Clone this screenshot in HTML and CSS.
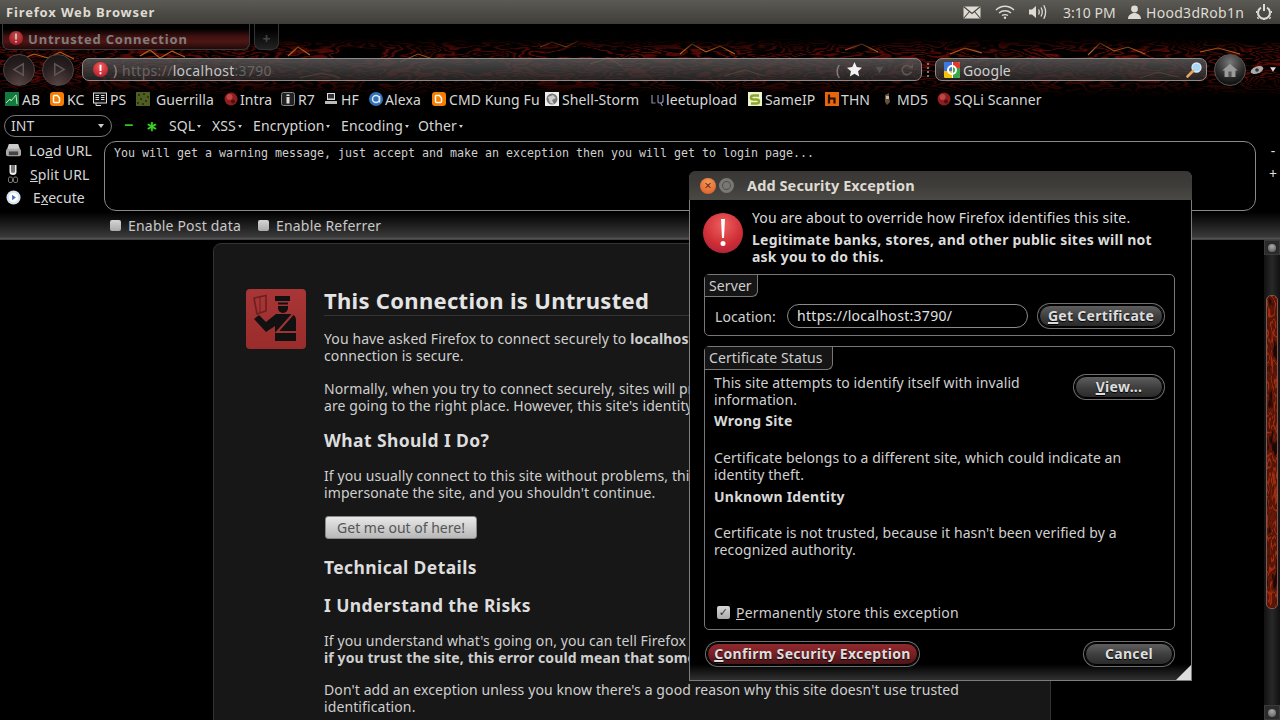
FILE: index.html
```html
<!DOCTYPE html>
<html lang="en">
<head>
<meta charset="utf-8">
<title>Untrusted Connection</title>
<link rel="stylesheet" href="styles.css">
</head>
<body>
<svg class="defs" width="0" height="0" aria-hidden="true">
  <defs>
    <filter id="lavaRed" x="0" y="0" width="100%" height="100%" color-interpolation-filters="sRGB">
      <feTurbulence type="fractalNoise" baseFrequency="0.018 0.07" numOctaves="3" seed="11" result="n"/>
      <feColorMatrix in="n" type="matrix" values="0 0 0 0 0.56  0 0 0 0 0.07  0 0 0 0 0.04  1 0 0 0 0"/>
      <feComponentTransfer><feFuncA type="table" tableValues="0 0 0 0 0 0 0 0 0 0 0 0 0 0 .2 .7 .2 0 0 .5 .6 0 0 .1 .6 .1 0 0 .5 .1 0 .4 .1 0 0 0 0 0 0 0 0"/></feComponentTransfer>
    </filter>
    <filter id="lavaV" x="0" y="0" width="100%" height="100%" color-interpolation-filters="sRGB">
      <feTurbulence type="fractalNoise" baseFrequency="0.1 0.03" numOctaves="3" seed="5" result="n"/>
      <feColorMatrix in="n" type="matrix" values="0 0 0 0 0.74  0 0 0 0 0.2  0 0 0 0 0.06  1 0 0 0 0"/>
      <feComponentTransfer><feFuncA type="table" tableValues="0 0 0 0 0 0 0 .2 .5 .3 .9 .3 .4 .3 .9 .3 .4 .2 0 0 0"/></feComponentTransfer>
    </filter>
    <linearGradient id="lavaFade" x1="0" y1="0" x2="0" y2="1">
      <stop offset="0" stop-color="#000"/>
      <stop offset=".08" stop-color="#000"/>
      <stop offset=".24" stop-color="#fff"/>
      <stop offset=".55" stop-color="#fff"/>
      <stop offset=".8" stop-color="#000"/>
    </linearGradient>
    <mask id="lavaMask"><rect width="1280" height="80" fill="url(#lavaFade)"/></mask>
    <radialGradient id="redDot" cx=".5" cy=".3" r=".8">
      <stop offset="0" stop-color="#ee6060"/><stop offset=".6" stop-color="#cf2f36"/><stop offset="1" stop-color="#a81e3c"/>
    </radialGradient>
    <linearGradient id="officerBg" x1="0" y1="0" x2="0" y2="1">
      <stop offset="0" stop-color="#a93636"/><stop offset="1" stop-color="#9a2c2c"/>
    </linearGradient>
  </defs>
</svg>

<header class="panel">
  <span class="panel-title">Firefox Web Browser</span>
  <div class="indicators">
    <svg class="ind-mail" viewBox="0 0 18 13"><rect x=".5" y=".5" width="17" height="12" fill="#dfdbd2"/><path d="M.5 .5 9 7.500 17.500 .5M.5 12.500 6.500 5.500M17.500 12.500 11.500 5.500" fill="none" stroke="#45433f" stroke-width="1.100"/></svg>
    <svg class="ind-wifi" viewBox="0 0 20 14"><path d="M1 5C6 0 14 0 19 5M4 8C7.500 5 12.500 5 16 8M7 10.500C8.500 9.500 11.500 9.500 13 10.500" fill="none" stroke="#dfdbd2" stroke-width="1.400"/><circle cx="10" cy="12.800" r="1.200" fill="#dfdbd2"/></svg>
    <svg class="ind-vol" viewBox="0 0 20 16"><path d="M1 5.500H4L8 2V14L4 10.500H1Z" fill="#dfdbd2"/><path d="M10.500 5.500Q12 8 10.500 10.500M13 3.500Q15.500 8 13 12.500M15.800 1.200Q19.400 8 15.800 14.800" fill="none" stroke="#dfdbd2" stroke-width="1.300"/></svg>
    <span class="ind-time">3:10 PM</span>
    <svg class="ind-user" viewBox="0 0 13 14"><circle cx="6.500" cy="4" r="3.400" fill="#dfdbd2"/><path d="M0 14C0 10 3 9 5 8H8C10 9 13 10 13 14Z" fill="#dfdbd2"/></svg>
    <span class="ind-name">Hood3dRob1n</span>
    <svg class="ind-power" viewBox="0 0 16 16"><path d="M5 3.600A6 6 0 1 0 11 3.600" fill="none" stroke="#dfdbd2" stroke-width="2"/><path d="M8 .5V7" stroke="#dfdbd2" stroke-width="2"/><path d="M8 0V2M1 8H0M16 8H15M2.500 13.500 1.500 14.500M13.500 13.500 14.500 14.500M8 15V16" stroke="#dfdbd2" stroke-width="2"/></svg>
  </div>
</header>

<section class="chrome">
  <svg class="lava" viewBox="0 0 1280 80" aria-hidden="true">
    <g mask="url(#lavaMask)">
      <rect width="1280" height="80" filter="url(#lavaRed)"/>
      <path d="M20 28 34 22 48 26 60 20 74 27M140 24 150 18 160 26 172 19 185 25M288 24 298 15 310 23M540 15 552 10 566 15 578 9M680 22 692 12 706 20 720 14 735 22M845 18 862 12 878 20M950 22 965 16 982 21M1088 23 1100 11 1114 19 1128 15 1145 22M1200 20 1218 16 1240 22" fill="none" stroke="#b8601c" stroke-width="1.100"/>
      <path d="M300 46 322 41 340 46M724 44 745 38 765 44M1140 46 1158 40 1178 45M590 32 608 26 622 34M400 30 418 22 436 28" fill="none" stroke="#8a5216" stroke-width="1"/>
    </g>
  </svg>

  <div class="tabs">
    <div class="tab">
      <svg class="tab-dot" viewBox="0 0 14 14"><circle cx="7" cy="7" r="7" fill="url(#redDot)"/><path d="M7 2.500V8.500M7 10V11.500" stroke="#fff" stroke-width="1.800"/></svg>
      <span>Untrusted Connection</span>
    </div>
    <div class="new-tab">+</div>
  </div>

  <div class="nav">
    <div class="round-btn"><svg viewBox="0 0 16 16"><path d="M12 2V14L2 8Z" fill="none" stroke="#5c5656" stroke-width="1.600"/></svg></div>
    <div class="round-btn second"><svg viewBox="0 0 16 16"><path d="M4 2V14L14 8Z" fill="none" stroke="#5c5656" stroke-width="1.600"/></svg></div>
    <div class="url-bar">
      <svg class="url-dot" viewBox="0 0 16 16"><circle cx="8" cy="8" r="8" fill="url(#redDot)"/><path d="M8 3V9.500M8 11V13" stroke="#fff" stroke-width="2"/></svg>
      <span class="url-bracket">)</span>
      <span class="url-text">https://<b>localhost</b>:3790</span>
      <span class="url-bracket end">(</span>
      <svg class="url-star" viewBox="0 0 16 16"><path d="M8 0 10.400 5.300 16 6 11.800 9.800 13 15.500 8 12.500 3 15.500 4.200 9.800 0 6 5.600 5.300Z" fill="#f2f2f2"/></svg>
      <svg class="url-drop" viewBox="0 0 10 10"><path d="M0 1H10L5 9Z" fill="#55514f"/></svg>
      <svg class="url-reload" viewBox="0 0 14 14"><path d="M12 5A5.500 5.500 0 1 0 12 9" fill="none" stroke="#5c5856" stroke-width="2"/><path d="M9 5H14V0Z" fill="#5c5856"/></svg>
    </div>
    <div class="grip"></div>
    <div class="search-bar">
      <svg class="g-logo" viewBox="0 0 16 16"><rect width="16" height="16" rx="2" fill="#fff"/><path d="M9 0H14A2 2 0 0 1 16 2V6H9Z" fill="#e03a2e"/><path d="M9 6H16V14A2 2 0 0 1 14 16H9Z" fill="#3aa648"/><path d="M0 9H8V16H2A2 2 0 0 1 0 14Z" fill="#f4c20d"/><path d="M0 0H8V9H0Z" fill="#3e78e0"/><circle cx="8" cy="8" r="4" fill="none" stroke="#fff" stroke-width="2"/></svg>
      <span>Google</span>
      <svg class="search-glass" viewBox="0 0 16 16"><circle cx="10.500" cy="5.500" r="4.500" fill="#a9d7f5" stroke="#d6eefc" stroke-width="1.300"/><path d="M7 9 1.500 14.500" stroke="#e0a860" stroke-width="2.600" stroke-linecap="round"/></svg>
    </div>
    <div class="home-btn"><svg viewBox="0 0 20 18"><path d="M10 1 20 9.500H17V18H3V9.500H0Z" fill="#9b9b9b"/><rect x="8" y="11" width="4" height="7" fill="#555"/></svg></div>
    <svg class="addon-eye" viewBox="0 0 14 10"><ellipse cx="7" cy="5" rx="6.500" ry="3.500" transform="rotate(-20 7 5)" fill="#aaa"/><circle cx="7" cy="5" r="1.800" fill="#333"/></svg>
    <svg class="addon-drop" viewBox="0 0 8 6"><path d="M0 0H8L4 6Z" fill="#ddd"/></svg>
  </div>

  <nav class="bookmarks">
    <a class="bm"><svg viewBox="0 0 14 14"><rect width="14" height="14" fill="#127a3e"/><path d="M1 11 5 7 6 9 11 3 12 12" fill="none" stroke="#bfe8b0" stroke-width="1"/></svg>AB</a>
    <a class="bm"><svg viewBox="0 0 14 14"><rect width="14" height="14" rx="3" fill="#f57d00"/><path d="M4 3.500H7.500L9.500 6V9.500A1 1 0 0 1 8.500 10.500H4.500A1 1 0 0 1 3.500 9.500V4Z" fill="none" stroke="#fff" stroke-width="1.500"/></svg>KC</a>
    <a class="bm"><svg viewBox="0 0 14 14"><rect x=".5" y="1" width="13" height="10" fill="#111" stroke="#ddd"/><path d="M2.500 3.500H6M2.500 5.500H6M2.500 7.500H6M8 3.500H11.500M8 5.500H11.500M8 7.500H11.500M3 11V13.500H8" stroke="#ddd" fill="none"/></svg>PS</a>
    <a class="bm wide"><svg viewBox="0 0 14 14"><rect width="14" height="14" fill="#4f5c22"/><path d="M2 2h2v2H2zM7 1h2v2H7zM11 4h2v2h-2zM4 6h2v2H4zM9 8h2v2H9zM1 10h2v2H1zM6 11h2v2H6z" fill="#2c3612"/></svg>Guerrilla</a>
    <a class="bm"><svg viewBox="0 0 14 14"><circle cx="7" cy="7" r="6.500" fill="#8e1f1f"/><circle cx="5.500" cy="5" r="3" fill="#c24545"/><circle cx="9" cy="9.500" r="2" fill="#4d0f0f"/></svg>Intra</a>
    <a class="bm"><svg viewBox="0 0 14 14"><rect x=".5" y=".5" width="13" height="13" rx="2" fill="#222" stroke="#888"/><path d="M5.500 5H8.500V11.500H5.500Z" fill="#ddd"/><rect x="5.500" y="2.500" width="3" height="1.500" fill="#ddd"/></svg>R7</a>
    <a class="bm"><svg viewBox="0 0 14 14"><rect x="3" y="1" width="8" height="7" fill="#ddd"/><rect x="4" y="2" width="6" height="4.500" fill="#333"/><rect x="1" y="9" width="12" height="3" fill="#bbb"/></svg>HF</a>
    <a class="bm"><svg viewBox="0 0 14 14"><circle cx="7" cy="7" r="7" fill="#3371b8"/><circle cx="7" cy="7" r="3.500" fill="none" stroke="#dce9f7" stroke-width="1.500"/><path d="M10.500 4V10.500" stroke="#dce9f7" stroke-width="1.500"/></svg>Alexa</a>
    <a class="bm"><svg viewBox="0 0 14 14"><rect width="14" height="14" rx="3" fill="#f57d00"/><path d="M4 3.500H7.500L9.500 6V9.500A1 1 0 0 1 8.500 10.500H4.500A1 1 0 0 1 3.500 9.500V4Z" fill="none" stroke="#fff" stroke-width="1.500"/></svg>CMD Kung Fu</a>
    <a class="bm"><svg viewBox="0 0 14 14"><rect width="14" height="14" fill="#eee"/><circle cx="7" cy="7" r="5.500" fill="#777"/><path d="M3 5 8 3 11 6 7 8 9 12 5 11Z" fill="#ccc"/></svg>Shell-Storm</a>
    <a class="bm"><svg viewBox="0 0 14 14"><path d="M2 3V11H5.500M8 3V10Q8 11 10 11Q13 11 13 9V3M10.500 11 12.500 14" fill="none" stroke="#8a8aa8" stroke-width="1.200"/></svg>leetupload</a>
    <a class="bm"><svg viewBox="0 0 14 14"><rect width="14" height="14" fill="#eef2d0"/><path d="M11 3.500H5.500Q3 3.500 3 5.500T5.500 7.500H8.500Q11 7.500 11 9.500T8.500 11.500H3" fill="none" stroke="#8aa82a" stroke-width="2.400"/></svg>SameIP</a>
    <a class="bm"><svg viewBox="0 0 14 14"><rect width="14" height="14" fill="#e8650a"/><path d="M4 2.500V11.500M4 6.500H9.500V11.500" fill="none" stroke="#201005" stroke-width="2.200"/></svg>THN</a>
    <a class="bm"><svg viewBox="0 0 14 14"><path d="M5 3 9 1V5L10 10 7 13 5 10Z" fill="#66503a"/><path d="M6 4H9V7H6Z" fill="#c8b89a"/></svg>MD5</a>
    <a class="bm"><svg viewBox="0 0 14 14"><circle cx="7" cy="7" r="6.500" fill="#8e1f1f"/><circle cx="5.500" cy="5" r="3" fill="#c24545"/><circle cx="9" cy="9.500" r="2" fill="#4d0f0f"/></svg>SQLi Scanner</a>
  </nav>

  <div class="hack-menu">
    <div class="int-select"><span>INT</span><i class="caret"></i></div>
    <span class="op">&minus;</span>
    <span class="op star">&lowast;</span>
    <ul class="menus">
      <li>SQL<i class="caret small"></i></li>
      <li>XSS<i class="caret small"></i></li>
      <li>Encryption<i class="caret small"></i></li>
      <li>Encoding<i class="caret small"></i></li>
      <li>Other<i class="caret small"></i></li>
    </ul>
  </div>

  <div class="hack-main">
    <div class="hack-actions">
      <div class="action">
        <svg viewBox="0 0 16 16"><path d="M3 1H13L15 7H1Z" fill="#ccc"/><rect y="6" width="16" height="8" rx="2" fill="#aaa"/><rect x="3" y="9" width="10" height="4" fill="#444"/></svg>
        <span class="load">Lo<u>a</u>d URL</span>
      </div>
      <div class="action">
        <svg class="split-icon" viewBox="0 0 12 18"><path d="M3.500 0V7Q3.500 9 6 9T8.500 7V0" fill="none" stroke="#eee" stroke-width="2"/><path d="M6 0V8" stroke="#eee"/><rect x="1.500" y="12" width="4" height="5.500" rx="1.500" fill="none" stroke="#777"/><rect x="6.500" y="12" width="4" height="5.500" rx="1.500" fill="none" stroke="#777"/></svg>
        <span class="split"><u>S</u>plit URL</span>
      </div>
      <div class="action">
        <svg viewBox="0 0 16 16"><circle cx="8" cy="8" r="7.500" fill="#d8e4f4"/><circle cx="8" cy="8" r="5" fill="#fff"/><path d="M6.500 5 10.500 8 6.500 11Z" fill="#3b6fc0"/></svg>
        <span class="exec">E<u>x</u>ecute</span>
      </div>
    </div>
    <div class="hack-text">You will get a warning message, just accept and make an exception then you will get to login page...</div>
    <div class="hack-zoom"><span>-</span><span>+</span></div>
  </div>

  <div class="hack-options">
    <label class="opt"><i class="check-off"></i>Enable Post data</label>
    <label class="opt"><i class="check-off"></i>Enable Referrer</label>
  </div>
</section>

<main class="viewport">
  <div class="page-area">
    <article class="error-page">
      <svg class="officer" viewBox="0 0 60 60">
        <rect width="60" height="60" rx="4" fill="url(#officerBg)"/>
        <path d="M8 9 20 6.500V22L11 25Z" fill="none" stroke="#6b1f1f" stroke-width="1.600"/>
        <path d="M14 8V23" stroke="#6b1f1f"/>
        <path d="M29 7H44V12H29ZM32 13.500H42V15.500H32Z" fill="#111"/>
        <path d="M32 17H42V19A5 5 0 0 1 32 19Z" fill="#111"/>
        <path d="M8 30 13 26 20 33 30 25H45Q50 26 50 31V52H29V37L20 43Z" fill="#111"/>
        <path d="M47 25 31 43H50" fill="none" stroke="#a33232" stroke-width="2"/>
      </svg>
      <div class="error-body">
        <h1>This Connection is Untrusted</h1>
        <p>You have asked Firefox to connect securely to <b>localhost:3790</b>, but we can't confirm that your<br>connection is secure.</p>
        <p>Normally, when you try to connect securely, sites will present trusted identification to prove that you<br>are going to the right place. However, this site's identity can't be verified.</p>
        <h2>What Should I Do?</h2>
        <p>If you usually connect to this site without problems, this error could mean that someone is trying to<br>impersonate the site, and you shouldn't continue.</p>
        <button class="escape" type="button">Get me out of here!</button>
        <h2>Technical Details</h2>
        <h2>I Understand the Risks</h2>
        <p>If you understand what's going on, you can tell Firefox to start trusting this site's identification. <br><b>if you trust the site, this error could mean that someone is tampering with your connection.</b></p>
        <p class="last">Don't add an exception unless you know there's a good reason why this site doesn't use trusted<br>identification.</p>
      </div>
    </article>
  </div>
  <aside class="scrollbar">
    <div class="sb-btn"><i></i></div>
    <div class="sb-track">
      <div class="sb-thumb"><svg viewBox="0 0 12 314" preserveAspectRatio="none"><rect width="12" height="314" filter="url(#lavaV)"/></svg></div>
    </div>
    <div class="sb-btn"><i></i></div>
  </aside>
</main>

<section class="dialog" role="dialog">
  <div class="dlg-title">
    <span class="wm-close">&times;</span>
    <span class="wm-min"></span>
    <strong>Add Security Exception</strong>
  </div>
  <div class="dlg-body">
    <div class="dlg-intro">
      <svg class="warn" viewBox="0 0 40 40"><circle cx="20" cy="20" r="20" fill="url(#redDot)"/><path d="M18 6H22L21 25H19Z" fill="#fff"/><circle cx="20" cy="30.500" r="2.500" fill="#fff"/></svg>
      <div class="intro-text">
        <p>You are about to override how Firefox identifies this site.</p>
        <p class="strong">Legitimate banks, stores, and other public sites will not<br>ask you to do this.</p>
      </div>
    </div>
    <div class="frame server">
      <div class="legend">Server</div>
      <div class="server-row">
        <label>Location:</label>
        <div class="location">https://localhost:3790/</div>
        <button class="pill get" type="button"><u>G</u>et Certificate</button>
      </div>
    </div>
    <div class="frame status">
      <div class="legend tall">Certificate Status</div>
      <div class="status-body">
        <div class="status-head">
          <p>This site attempts to identify itself with invalid<br>information.</p>
          <button class="pill view" type="button"><u>V</u>iew...</button>
        </div>
        <p class="issue">Wrong Site</p>
        <p class="issue-text">Certificate belongs to a different site, which could indicate an<br>identity theft.</p>
        <p class="issue">Unknown Identity</p>
        <p class="issue-text">Certificate is not trusted, because it hasn't been verified by a<br>recognized authority.</p>
      </div>
      <label class="store"><i class="check-on">&#10003;</i><span><u>P</u>ermanently store this exception</span></label>
    </div>
    <div class="dlg-actions">
      <button class="pill confirm" type="button"><u>C</u>onfirm Security Exception</button>
      <button class="pill cancel" type="button">Cancel</button>
    </div>
  </div>
  <span class="resize-grip"></span>
</section>
</body>
</html>
```
FILE: styles.css
```css
* { box-sizing: border-box; }
html, body { margin: 0; height: 720px; overflow: hidden; }
body {
  width: 1280px;
  background: #000;
  color: #d6d6d6;
  font: 14px/17px "Noto Sans", "Open Sans", sans-serif;
  letter-spacing: .1px;
  display: flex;
  flex-direction: column;
  position: relative;
}
p, h1, h2, ul { margin: 0; padding: 0; }
.defs { position: absolute; }
svg { display: block; flex: none; }
button { font-family: inherit; }
i { font-style: normal; }

/* top panel */
.panel {
  height: 24px;
  flex: none;
  background: linear-gradient(#5c5a54, #3e3d39);
  display: flex;
  align-items: center;
  justify-content: space-between;
  padding: 0 8px 0 6px;
  color: #dfdbd2;
}
.panel-title { font-weight: 700; font-size: 13px; letter-spacing: .85px; }
.indicators { display: flex; align-items: center; }
.ind-mail { width: 18px; height: 13px; }
.ind-wifi { width: 20px; height: 14px; margin-left: 14px; }
.ind-vol { width: 20px; height: 16px; margin-left: 13px; }
.ind-time { margin-left: 15px; font-size: 14px; letter-spacing: 0; width: 53px; white-space: nowrap; }
.ind-user { width: 13px; height: 14px; margin-left: 12px; }
.ind-name { margin-left: 5px; width: 97px; letter-spacing: .3px; white-space: nowrap; }
.ind-power { width: 16px; height: 16px; margin-left: 13px; }

/* browser chrome */
.chrome {
  height: 216px;
  flex: none;
  position: relative;
  display: flex;
  flex-direction: column;
  background: linear-gradient(#000 188px, #1b1b1b 200px, #3a3a3a 213px, #5a5a5a 215px, #2a2a2a 216px);
}
.lava { position: absolute; left: 0; top: 8px; width: 1280px; height: 80px; }
.chrome > div, .chrome > nav { position: relative; }

.tabs { height: 28px; display: flex; gap: 4px; padding: 0 0 0 2px; align-items: flex-start; flex: none; }
.tab {
  width: 248px;
  height: 26px;
  padding: 7px 0 0 6px;
  border: 1px solid #3a3a3a;
  border-top: 0;
  border-radius: 0 0 7px 7px;
  background: linear-gradient(#000 20%, #3f1110 50%, #4d1614 70%, #1e0a09);
  display: flex;
  gap: 5px;
  color: #7e7e7e;
  font-weight: 700;
  font-size: 13px;
  line-height: 16px;
  letter-spacing: .8px;
}
.tab-dot { width: 14px; height: 14px; opacity: .75; }
.new-tab {
  width: 25px;
  height: 26px;
  border: 1px solid #333;
  border-top: 0;
  border-radius: 0 0 7px 7px;
  background: linear-gradient(#000 20%, #222);
  color: #444;
  text-align: center;
  padding-top: 6px;
  font-weight: 700;
}

.nav { height: 35px; flex: none; display: flex; align-items: center; padding-left: 3px; }
.round-btn {
  width: 32px;
  height: 32px;
  border-radius: 50%;
  border: 1px solid #4d4545;
  background: radial-gradient(circle at 50% 100%, #5a4444, #2a2020 55%, #151212);
  display: flex;
  align-items: center;
  justify-content: center;
}
.round-btn svg { width: 15px; height: 15px; }
.round-btn.second { margin-left: 7px; }
.url-bar {
  width: 840px;
  height: 23px;
  margin-left: 8px;
  border: 1px solid #8a8a8a;
  border-radius: 7px;
  background: linear-gradient(rgba(92,92,92,.8), rgba(46,46,46,.7));
  display: flex;
  align-items: center;
  padding-left: 10px;
  color: #666;
}
.url-dot { width: 15px; height: 15px; }
.url-bracket { margin-left: 5px; color: #8a8a8a; width: 5px; }
.url-text { margin-left: 4px; padding-top: 2px; font-size: 14px; letter-spacing: .3px; }
.url-text b { font-weight: 400; color: #c4c4c4; }
.url-bracket.end { margin-left: auto; }
.url-star { width: 15px; height: 15px; margin-left: 6px; }
.url-drop { width: 9px; height: 8px; margin-left: 13px; }
.url-reload { width: 12px; height: 12px; margin: 0 8px 0 17px; }
.grip { width: 3px; height: 14px; margin-left: 5px; border-left: 2px dotted #777; }
.search-bar {
  width: 272px;
  height: 23px;
  margin-left: 5px;
  border: 1px solid #8a8a8a;
  border-radius: 7px;
  background: linear-gradient(rgba(92,92,92,.8), rgba(46,46,46,.7));
  display: flex;
  align-items: center;
  padding-left: 8px;
  color: #cfcfcf;
  font-size: 14px;
}
.search-bar span { padding-top: 2px; }
.g-logo { width: 16px; height: 16px; margin-right: 3px; }
.search-glass { width: 16px; height: 16px; margin: 0 4px 0 auto; }
.home-btn {
  width: 32px;
  height: 32px;
  margin-left: 7px;
  border-radius: 50%;
  border: 1px solid #555;
  background: radial-gradient(circle at 50% 25%, #777, #2a2a2a 55%, #111 80%, #444);
  display: flex;
  align-items: center;
  justify-content: center;
}
.home-btn svg { width: 16px; height: 14px; }
.addon-eye { width: 14px; height: 10px; margin-left: 4px; }
.addon-drop { width: 6px; height: 5px; margin-left: 6px; }

.bookmarks { height: 24px; flex: none; display: flex; align-items: center; padding-left: 5px; font-size: 14px; color: #d6d6d6; }
.bm { display: flex; align-items: center; gap: 3px; white-space: nowrap; flex: none; }
.bm svg { width: 14px; height: 14px; }
.bm.wide { gap: 6px; }
.bm:nth-child(1) { width: 45px; }
.bm:nth-child(2) { width: 43px; }
.bm:nth-child(3) { width: 43px; }
.bm:nth-child(4) { width: 88px; }
.bm:nth-child(5) { width: 57px; gap: 2px; }
.bm:nth-child(6) { width: 43px; }
.bm:nth-child(7) { width: 45px; }
.bm:nth-child(8) { width: 63px; gap: 2px; }
.bm:nth-child(9) { width: 113px; }
.bm:nth-child(10) { width: 105px; }
.bm:nth-child(11) { width: 98px; gap: 2px; }
.bm:nth-child(12) { width: 77px; }
.bm:nth-child(13) { width: 55px; gap: 2px; }
.bm:nth-child(14) { width: 57px; }

.hack-menu { height: 28px; flex: none; display: flex; align-items: center; padding-left: 4px; font-size: 14px; }
.int-select {
  width: 108px;
  height: 22px;
  margin-top: 2px;
  border: 1px solid #777;
  border-radius: 11px;
  padding: 0 7px 1px 6px;
  display: flex;
  align-items: center;
  justify-content: space-between;
}
.caret { width: 0; height: 0; border: 3px solid transparent; border-top: 4px solid #ccc; border-bottom: 0; }
.caret.small { display: inline-block; margin-left: 2px; vertical-align: 3px; border-width: 2.500px; border-top-width: 3px; border-bottom-width: 0; }
.op { color: #35c71f; font-weight: 700; font-size: 16px; width: 22px; margin-left: 12px; }
.op.star { margin-left: 0; font-size: 14px; color: #3bd124; }
.menus { display: flex; list-style: none; margin-left: 1px; }
.menus li:nth-child(1) { width: 43px; }
.menus li:nth-child(2) { width: 41px; }
.menus li:nth-child(3) { width: 88px; }
.menus li:nth-child(4) { width: 77px; }

.hack-main { height: 74px; flex: none; display: flex; }
.hack-actions { width: 104px; flex: none; display: flex; flex-direction: column; }
.action { height: 23.500px; display: flex; align-items: center; padding-left: 6px; }
.action svg { width: 15px; height: 15px; }
.action svg.split-icon { width: 12px; height: 18px; margin-left: 1px; }
.load { margin-left: 8px; }
.split { margin-left: 11px; }
.exec { margin-left: 12px; }
.hack-text {
  width: 1152px;
  height: 70px;
  margin-top: 2px;
  border: 1px solid #8a8a8a;
  border-radius: 12px;
  padding: 3px 9px;
  font: 11.630px/17px "DejaVu Sans Mono", monospace;
  letter-spacing: 0;
  color: #cfcfcf;
  white-space: pre;
}
.hack-zoom { flex: 1; display: flex; flex-direction: column; align-items: center; padding: 0 0 0 10px; line-height: 23px; color: #ddd; }
.hack-options { height: 27px; flex: none; display: flex; align-items: center; padding: 0 0 2px 110px; gap: 17px; font-size: 14px; letter-spacing: .2px; }
.opt { display: flex; align-items: center; gap: 7px; color: #c8c8c8; }
.check-off { width: 11px; height: 11px; background: linear-gradient(#d5d5d5, #aaa); border-radius: 2px; }

/* viewport */
.viewport { flex: 1; min-height: 0; display: flex; overflow: hidden; }
.page-area { flex: 1; padding: 3px 0 0 213px; }
.error-page {
  width: 838px;
  height: 520px;
  background: #171717;
  border: 1px solid #333;
  border-radius: 8px 8px 0 0;
  padding: 45px 32px 0;
  display: flex;
  gap: 18px;
}
.officer { width: 60px; height: 60px; }
.error-body { flex: 1; white-space: nowrap; }
h1 {
  font-size: 22px;
  line-height: 26px;
  font-weight: 700;
  letter-spacing: .3px;
  color: #e4e4e4;
  border-bottom: 1px solid #333;
  margin: -2px 0 14px;
  padding-bottom: 2px;
}
h2 { font-size: 17.500px; line-height: 24px; font-weight: 700; letter-spacing: .4px; color: #ddd; margin: -2px 0 15px; }
h2 + h2 { margin-top: -1px; }
.error-body p { margin-bottom: 16px; color: #cfcfcf; }
.error-body p.last { margin-top: -1px; }
.error-body b { font-weight: 700; }
.escape {
  display: block;
  width: 152px;
  height: 23px;
  padding: 0;
  border: 1px solid #888;
  border-radius: 3px;
  background: linear-gradient(#e8e8e8, #b8b8b8);
  color: #555;
  font-size: 14px;
  margin: -1px 0 18px 1px;
}
.scrollbar { width: 16px; flex: none; display: flex; flex-direction: column; background: #0c0c0c; }
.sb-btn { height: 15px; flex: none; background: #2b2b2b; border: 1px solid #3a3a3a; display: flex; align-items: center; justify-content: center; }
.sb-btn i { width: 8px; height: 8px; border-radius: 50%; background: radial-gradient(circle at 50% 30%, #aaa, #555); }
.sb-track { flex: 1; background: linear-gradient(90deg, #111, #282828 50%, #111); padding-top: 40px; display: flex; justify-content: center; }
.sb-thumb { width: 12px; height: 314px; border-radius: 5px; border: 1px solid #7a5a54; background: #1e0604; overflow: hidden; }
.sb-thumb svg { width: 100%; height: 100%; }

/* dialog */
.dialog {
  position: absolute;
  left: 689px;
  top: 171px;
  width: 503px;
  height: 510px;
  display: flex;
  flex-direction: column;
  background: #000;
  border: 1px solid #7d7d7d;
  border-top: 0;
  border-radius: 7px 7px 0 0;
}
.dlg-title {
  height: 29px;
  flex: none;
  margin: 0 -1px;
  border-radius: 7px 7px 0 0;
  background: linear-gradient(#383735 0, #3e3d3a 50%, #4b4945 100%);
  display: flex;
  align-items: center;
  padding-left: 11px;
  color: #dfdbd2;
}
.dlg-title strong { margin-left: 13px; font-size: 14.500px; letter-spacing: .1px; white-space: nowrap; }
.wm-close {
  width: 16px;
  height: 16px;
  border-radius: 50%;
  background: radial-gradient(circle at 50% 30%, #f59a5d, #d9551f);
  color: #6a2a0a;
  font-size: 13px;
  line-height: 15px;
  text-align: center;
}
.wm-min {
  width: 15px;
  height: 15px;
  margin-left: 3px;
  border-radius: 50%;
  background: #7a7873;
  border: 3.500px solid #7a7873;
  box-shadow: inset 0 0 0 1px #4c4a46;
}
.dlg-body {
  flex: 1;
  min-height: 0;
  display: flex;
  flex-direction: column;
  padding: 9px 16px 0 14px;
  background: linear-gradient(#000 464px, #303030 480px);
}
.dlg-intro { display: flex; gap: 9px; color: #dcdcdc; }
.warn { width: 40px; height: 40px; margin: 4px 0 0 -1px; }
.intro-text { letter-spacing: .15px; white-space: nowrap; }
.intro-text .strong { margin-top: 5px; font-weight: 700; letter-spacing: .23px; }
.frame { border: 1px solid #777; border-radius: 5px; margin-top: 9px; flex: none; }
.frame.server { height: 62px; }
.frame.status { height: 284px; margin-top: 10px; display: flex; flex-direction: column; }
.legend {
  width: 53px;
  height: 22px;
  border: 1px solid #777;
  border-width: 0 1px 1px 0;
  border-radius: 0 0 6px 0;
  background: #151515;
  padding-left: 4px;
  line-height: 21px;
  color: #cfcfcf;
}
.legend.tall { width: 128px; height: 23px; }
.server-row { display: flex; align-items: center; margin-top: 7px; padding-left: 10px; }
.server-row label { color: #d0d0d0; width: 72px; }
.location {
  width: 241px;
  height: 24px;
  border: 1px solid #8a8a8a;
  border-radius: 12px;
  padding-left: 9px;
  line-height: 22px;
  color: #e2e2e2;
  letter-spacing: .3px;
}
.pill {
  height: 22px;
  padding: 0;
  border: 1px solid #000;
  border-radius: 11px;
  box-shadow: 0 0 0 1px #000, 0 0 0 2px #6f6f6f;
  background: linear-gradient(#5e5e5e, #3d3d3d 55%, #2a2a2a);
  color: #dedede;
  font-size: 14px;
  font-weight: 700;
  line-height: 18px;
  letter-spacing: .3px;
  text-shadow: 0 1px 1px #000;
  white-space: nowrap;
}
.pill u { text-decoration-thickness: 2px; }
.pill.get { width: 124px; margin-left: 11px; }
.status-body { padding: 4px 9px 0; flex: 1; color: #d0d0d0; }
.status-head { display: flex; justify-content: space-between; white-space: nowrap; }
.pill.view { width: 88px; margin: 2px 2px 0 0; }
.issue { font-weight: 700; margin-top: 4px; color: #d8d8d8; letter-spacing: .25px; }
.issue-text { margin-top: 20px; white-space: nowrap; }
.issue-text + .issue { margin-top: 5px; }
.issue-text:last-child { margin-top: 19px; }
.store { display: flex; align-items: center; gap: 6px; padding: 0 0 8px 12px; color: #cfcfcf; letter-spacing: .2px; }
.check-on {
  width: 13px;
  height: 13px;
  background: linear-gradient(#d8d8d8, #aaa);
  border-radius: 2px;
  color: #333;
  font: 11px/13px "DejaVu Sans", sans-serif;
  text-align: center;
}
.dlg-actions { display: flex; justify-content: space-between; margin-top: 13px; padding: 0 2px 0 3px; }
.pill.confirm {
  width: 211px;
  background: linear-gradient(#8f2a2e, #7a1f25 50%, #4a1518);
}
.pill.cancel { width: 88px; }
.resize-grip {
  position: absolute;
  right: 0;
  bottom: 0;
  width: 0;
  height: 0;
  border-style: solid;
  border-width: 0 0 15px 15px;
  border-color: transparent transparent #dcdcdc transparent;
}
```
